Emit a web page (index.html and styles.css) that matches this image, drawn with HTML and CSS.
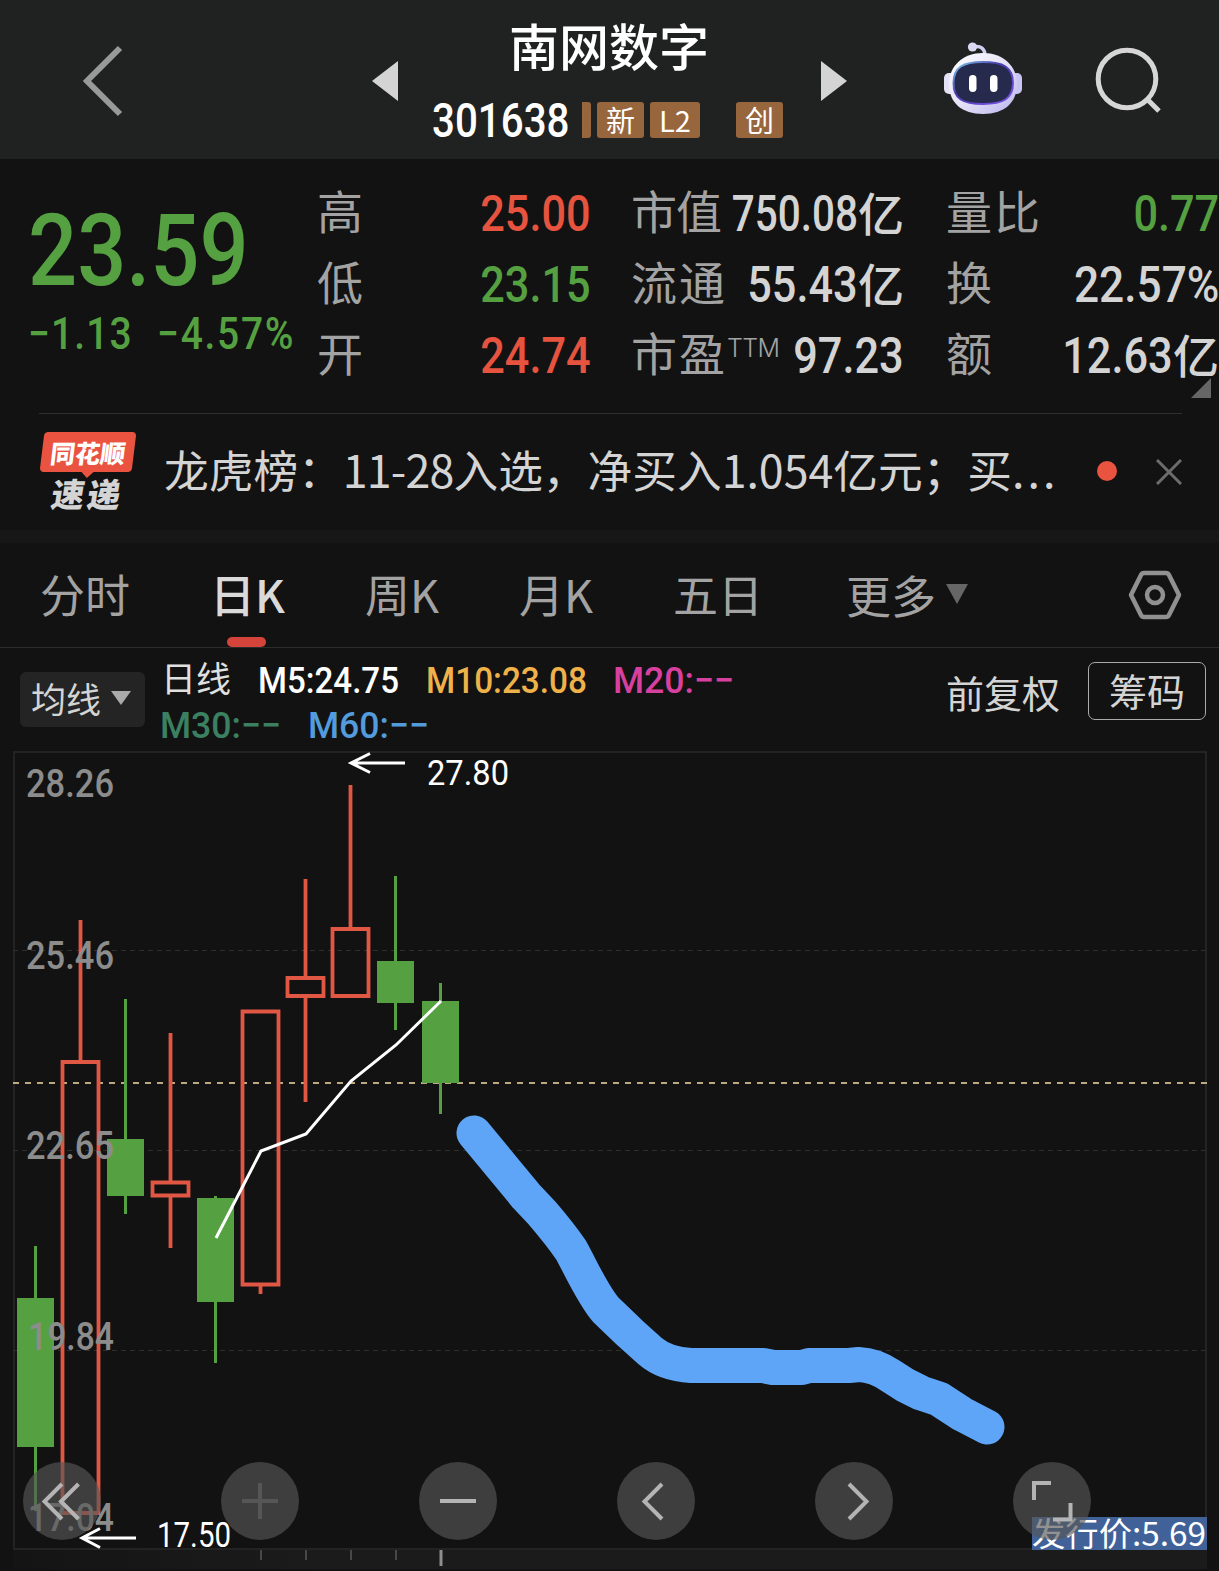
FILE: index.html
```html
<!DOCTYPE html>
<html lang="zh-CN">
<head>
    <meta charset="UTF-8">
    <meta name="viewport" content="width=device-width, initial-scale=1.0">
    <title>南网数字 301638</title>
    <link rel="stylesheet" href="styles.css">
</head>
<body>
    <header class="header">
        <svg class="back" width="50" height="80" viewBox="0 0 50 80"><path d="M41 8 L8 41 L41 74" fill="none" stroke="#999" stroke-width="6"/></svg>
        <svg class="prev" width="26" height="40" viewBox="0 0 26 40"><path d="M26 0V40L0 20z" fill="#d4d4d4"/></svg>
        <div class="stock">
            <h1>南网数字</h1>
            <div class="code-row">
                <span class="code num">301638</span>
                <span class="badge cut"></span>
                <span class="badge">新</span>
                <span class="badge l2">L2</span>
                <span class="badge gem">创</span>
            </div>
        </div>
        <svg class="next" width="26" height="40" viewBox="0 0 26 40"><path d="M0 0V40L26 20z" fill="#d4d4d4"/></svg>
        <!-- 机器人 -->
        <svg class="robot" width="80" height="76" viewBox="0 0 80 76">
            <defs>
                <linearGradient id="shell" x1="0" y1="0" x2="1" y2="1">
                    <stop offset="0" stop-color="#ffffff"/>
                    <stop offset=".5" stop-color="#e6e2f6"/>
                    <stop offset="1" stop-color="#b9b5ee"/>
                </linearGradient>
                <linearGradient id="rim" x1="0" y1="0" x2="1" y2="1">
                    <stop offset="0" stop-color="#7fd0ee"/>
                    <stop offset=".4" stop-color="#4b3bb0"/>
                    <stop offset="1" stop-color="#7a55e8"/>
                </linearGradient>
            </defs>
            <path d="M30 6C38 4 42 8 42 15" fill="none" stroke="#d3cff0" stroke-width="3.5"/>
            <circle cx="29.500" cy="6" r="4.600" fill="#dcd9f2"/>
            <rect x="1" y="32" width="12" height="21" rx="5" fill="#e4e1f6"/>
            <rect x="67" y="32" width="12" height="21" rx="5" fill="#c9c5f2"/>
            <path d="M40 12C60 12 74 25 74 43C74 62 61 73 40 73C19 73 6 62 6 43C6 25 20 12 40 12z" fill="url(#shell)"/>
            <path d="M40 21C60 21 70 26 70 42C70 58 60 63 40 63C20 63 10.500 58 10.500 42C10.500 26 20 21 40 21z" fill="#262b4e" stroke="url(#rim)" stroke-width="2"/>
            <rect x="26" y="34" width="7.500" height="17" rx="3.700" fill="#fff"/>
            <rect x="47" y="34" width="7.500" height="17" rx="3.700" fill="#fff"/>
        </svg>
        <svg class="search" width="70" height="70" viewBox="0 0 70 70"><g fill="none" stroke="#d6d6d6" stroke-width="5"><circle cx="33" cy="33" r="28.800"/><path d="M53 53L65 65"/></g></svg>
    </header>

    <section class="quote">
        <div class="price">
            <div class="last num">23.59</div>
            <div class="change"><span class="num">−1.13</span><span class="num">−4.57%</span></div>
        </div>
        <dl class="col col-a">
            <div><dt>高</dt><dd class="up"><span class="num">25.00</span></dd></div>
            <div><dt>低</dt><dd class="down"><span class="num">23.15</span></dd></div>
            <div><dt>开</dt><dd class="up"><span class="num">24.74</span></dd></div>
        </dl>
        <dl class="col col-b">
            <div><dt class="tight">市值</dt><dd><span class="num squeeze">750.08</span>亿</dd></div>
            <div><dt>流通</dt><dd><span class="num">55.43</span>亿</dd></div>
            <div><dt>市盈<sup>TTM</sup></dt><dd><span class="num">97.23</span></dd></div>
        </dl>
        <dl class="col col-c">
            <div><dt>量比</dt><dd class="down"><span class="num">0.77</span></dd></div>
            <div><dt>换</dt><dd><span class="num percent">22.57%</span></dd></div>
            <div><dt>额</dt><dd><span class="num">12.63</span>亿</dd></div>
        </dl>
        <span class="corner"></span>
    </section>

    <section class="news">
        <div class="logo">
            <span class="logo-top">同花顺</span>
            <span class="logo-bottom">速递</span>
        </div>
        <p>龙虎榜：<span class="date">11-28</span>入选，净买入<span class="amount">1.054</span>亿元；买<span class="dots">...</span></p>
        <span class="dot"></span>
        <svg class="close" width="26" height="26" viewBox="0 0 26 26"><path d="M1 1L25 25M25 1L1 25" stroke="#6c6c6c" stroke-width="3"/></svg>
    </section>

    <nav class="tabs">
        <a>分时</a>
        <a class="active">日K</a>
        <a>周K</a>
        <a>月K</a>
        <a>五日</a>
        <a class="more">更多<svg width="24" height="20" viewBox="0 0 24 20"><path d="M1 0H23L12 20z" fill="#666"/></svg></a>
        <svg class="settings" width="54" height="50" viewBox="0 0 54 50"><g fill="none" stroke="#919191" stroke-width="4.500" stroke-linejoin="round"><path d="M16 3H38Q40 3 41 5L51 25L41 45Q40 47 38 47H16Q14 47 13 45L3 25L13 5Q14 3 16 3z"/><circle cx="27" cy="25" r="8"/></g></svg>
    </nav>

    <section class="ma">
        <button class="ma-type">均线<svg width="20" height="14" viewBox="0 0 20 14"><path d="M0 0H20L10 14z" fill="#aaa"/></svg></button>
        <svg class="ma-values" width="600" height="88" viewBox="161 656 600 88">
            <text class="cjk" x="161" y="692">日线</text>
            <text x="258" y="693" fill="#fff" textLength="141" lengthAdjust="spacingAndGlyphs">M5:24.75</text>
            <text x="426" y="693" fill="#efb24a" textLength="161" lengthAdjust="spacingAndGlyphs">M10:23.08</text>
            <text x="613" y="693" fill="#d8409f" textLength="121" lengthAdjust="spacingAndGlyphs">M20:−−</text>
            <text x="160" y="738" fill="#3b8060" textLength="121" lengthAdjust="spacingAndGlyphs">M30:−−</text>
            <text x="308" y="738" fill="#529bdc" textLength="121" lengthAdjust="spacingAndGlyphs">M60:−−</text>
        </svg>
        <span class="adjust">前复权</span>
        <button class="chips">筹码</button>
    </section>

    <section class="chart">
        <svg width="1219" height="827" viewBox="0 744 1219 827">
            <defs>
                <linearGradient id="strip" x1="0" x2="1">
                    <stop offset="0" stop-color="#141414"/>
                    <stop offset=".25" stop-color="#1b1b1b"/>
                </linearGradient>
            </defs>
            <rect x="13" y="1549" width="1194" height="20" fill="url(#strip)"/>
            <rect x="14" y="752" width="1192" height="797" fill="none" stroke="#232323" stroke-width="2"/>
            <g stroke="#2f2f2f" stroke-dasharray="5 4">
                <path d="M13 950.500H1206M13 1150.500H1206M13 1350.500H1206"/>
            </g>
            <path d="M13 1083H1207" stroke="#bca97f" stroke-width="2" stroke-dasharray="6 6"/>

            <!-- 阴线 -->
            <g fill="#55a041">
                <path d="M17 1298h37v149h-37zM34 1246h3v265h-3z"/>
                <path d="M107 1139h37v57h-37zM124 999h3v215h-3z"/>
                <path d="M197 1198h37v104h-37zM214 1196h3v167h-3z"/>
                <path d="M377 961h37v42h-37zM394 876h3v154h-3z"/>
                <path d="M422 1001h37v82h-37zM439 983h3v131h-3z"/>
            </g>
            <!-- 阳线 -->
            <g fill="none" stroke="#e05844" stroke-width="3.800">
                <path d="M62.500 1062h36v451h-36zM80.500 920v142"/>
                <path d="M152.500 1182.500h36v13h-36zM170.500 1033v149M170.500 1196v52"/>
                <path d="M242.500 1011.500h36v273h-36zM260.500 1284v10"/>
                <path d="M287.500 978h36v18h-36zM305.500 879v99M305.500 996v106"/>
                <path d="M332.500 929h36v67h-36zM350.500 785v144"/>
            </g>
            <polyline points="216,1238 261,1151 306,1134 351,1081 396,1045 441,1001" fill="none" stroke="#fff" stroke-width="3"/>

            <g class="axis">
                <text x="26" y="797" textLength="88" lengthAdjust="spacingAndGlyphs">28.26</text>
                <text x="26" y="969" textLength="88" lengthAdjust="spacingAndGlyphs">25.46</text>
                <text x="26" y="1159" textLength="88" lengthAdjust="spacingAndGlyphs">22.65</text>
                <text x="28" y="1350" textLength="86" lengthAdjust="spacingAndGlyphs">19.84</text>
                <text x="28" y="1531" textLength="86" lengthAdjust="spacingAndGlyphs">17.04</text>
            </g>

            <path d="M474 1133L526 1196L542 1213Q560 1234 571 1250C582 1270 593 1295 606 1310L630 1333L650 1351Q665 1364 691 1365.500H763L773 1367.500H802L809 1365.500H849L859 1364.500Q875 1365 891 1376L905 1385L921 1393L939 1399L962 1414L987 1427" fill="none" stroke="#5ea5f7" stroke-width="35" stroke-linecap="round" stroke-linejoin="round"/>

            <rect x="1032" y="1517" width="175" height="33" fill="#416299"/>
            <text class="issue" x="1032" y="1546" textLength="174" lengthAdjust="spacingAndGlyphs">发行价:5.69</text>

            <path d="M261 1550v10M306 1550v10M351 1550v10M396 1550v10" stroke="#484848" stroke-width="2"/>
            <path d="M441 1550v16" stroke="#8e8e8e" stroke-width="3"/>
            <g class="mark">
                <path d="M405 763H351M370 753.500L351 763L370 772.500"/>
                <text x="427" y="785" textLength="82" lengthAdjust="spacingAndGlyphs">27.80</text>
            </g>
        </svg>

        <div class="controls">
            <button><svg viewBox="0 0 78 78"><path d="M39 22L21.500 39.500L39 57M55.500 22L38 39.500L55.500 57"/></svg></button>
            <button class="off"><svg viewBox="0 0 78 78"><path d="M21 39H57M39 21V57"/></svg></button>
            <button><svg viewBox="0 0 78 78"><path d="M21 39H57"/></svg></button>
            <button><svg viewBox="0 0 78 78"><path d="M45 22L27.500 39.500L45 57"/></svg></button>
            <button><svg viewBox="0 0 78 78"><path d="M34 22L51.500 39.500L34 57"/></svg></button>
            <button><svg viewBox="0 0 78 78"><path d="M21 38V21H38M57.500 41V57.500H40"/></svg></button>
        </div>

        <!-- 最低价标记压在按钮上面 -->
        <svg class="low" width="180" height="65" viewBox="78 1506 180 65">
            <g class="mark">
                <path d="M136 1538H82M100 1528.500L82 1538L100 1547.500"/>
                <text x="157" y="1547" textLength="74" lengthAdjust="spacingAndGlyphs">17.50</text>
            </g>
        </svg>
    </section>
</body>
</html>
```

FILE: styles.css
```css
* {
    box-sizing: border-box;
}
body {
    margin: 0;
    width: 1219px;
    height: 1571px;
    overflow: hidden;
    background-color: #121212;
    color: #d4d4d4;
    font-family: "Noto Sans CJK SC", sans-serif;
}
svg {
    display: block;
    flex: none;
}
button {
    border: none;
    padding: 0;
    color: inherit;
    font-family: inherit;
}
/* 窄体数字 */
.num {
    display: inline-block;
    font-family: Roboto, sans-serif;
    font-weight: 500;
    transform: scaleX(0.865);
    transform-origin: left;
    white-space: nowrap;
}

/* 顶部 */
.header {
    display: flex;
    align-items: flex-start;
    height: 159px;
    background-color: #202221;
}
.back {
    margin: 40px 0 0 79px;
}
.prev {
    margin: 61px 0 0 243px;
}
.stock {
    width: 423px;
    padding-left: 34px;
}
.stock h1 {
    margin: 7px 0 0 77px;
    font-size: 50px;
    line-height: 74px;
    font-weight: 500;
    color: #fff;
}
.code-row {
    display: flex;
    height: 36px;
    margin-top: 21px;
}
.code {
    width: 150px;
    font-size: 48px;
    line-height: 38px;
    color: #fff;
    transform: scaleX(0.84);
}
.badge {
    width: 47px;
    margin-right: 6px;
    border-radius: 3px;
    background-color: #97663c;
    color: #fff;
    font-size: 29px;
    line-height: 34px;
    text-align: center;
}
.cut {
    width: 9px;
    border-radius: 0 3px 3px 0;
}
.l2 {
    width: 50px;
}
.gem {
    margin-left: 30px;
}
.next {
    margin-top: 61px;
}
.robot {
    margin: 41px 0 0 96px;
}
.search {
    margin: 46px 0 0 71px;
}

/* 行情 */
.quote {
    position: relative;
    display: flex;
    height: 254px;
    margin-left: 28px;
    padding-top: 20px;
}
.price {
    width: 289px;
    color: #55a041;
}
.last {
    margin-top: 16px;
    font-size: 100px;
    line-height: 112px;
}
.change {
    display: flex;
    font-size: 45px;
    line-height: 54px;
    letter-spacing: 1.300px;
}
.change span:first-child {
    width: 131px;
}
.change span:last-child {
    letter-spacing: 2px;
}
.col {
    margin: 0;
}
.col > div {
    display: flex;
    justify-content: space-between;
    height: 71px;
    line-height: 66px;
    white-space: nowrap;
}
.col-a {
    width: 274px;
}
.col-b {
    width: 273px;
    margin-left: 40px;
}
.col-c {
    width: 273px;
    margin-left: 42px;
}
dt {
    margin-top: -3px;
    font-size: 46px;
    letter-spacing: 2px;
    color: #a3a3a3;
}
.tight {
    letter-spacing: -1px;
}
dt sup {
    display: inline-block;
    font-family: Inter, sans-serif;
    font-weight: 300;
    font-size: 25px;
    line-height: 20px;
    letter-spacing: -0.700px;
    vertical-align: 14px;
}
dd {
    margin: -1px 0 0 -70px;
    font-size: 46px;
    font-weight: 500;
}
dd .num {
    font-size: 50px;
    line-height: 70px;
    transform-origin: right;
}
dd .squeeze {
    transform: scaleX(0.81);
}
dd .percent {
    transform: scaleX(0.885);
}
.up {
    color: #e6543f;
}
.down {
    color: #55a041;
}
.corner {
    position: absolute;
    right: 8px;
    bottom: 15px;
    border-left: 20px solid transparent;
    border-bottom: 20px solid #666;
}

/* 快讯 */
.news {
    display: flex;
    height: 117px;
    margin: 0 37px 0 39px;
    border-top: 1px solid #2e2e2e;
}
.logo {
    position: relative;
    width: 97px;
    margin-top: 18px;
}
.logo-top {
    display: block;
    width: 92px;
    height: 40px;
    margin-left: 3px;
    border-radius: 4px;
    background-color: #ea5340;
    color: #fff;
    font-size: 25px;
    font-weight: 900;
    line-height: 40px;
    text-align: center;
    transform: skewX(-7deg);
}
.logo-top::after {
    content: "";
    position: absolute;
    left: 41px;
    top: 39px;
    border: 7px solid transparent;
    border-top-color: #ea5340;
}
.logo-bottom {
    display: block;
    margin-left: 13px;
    font-size: 33px;
    font-weight: 900;
    line-height: 42px;
    letter-spacing: 3px;
    transform: skewX(-9deg);
    white-space: nowrap;
}
.news p {
    width: 928px;
    margin: 20px 0 0 28px;
    font-size: 44.700px;
    line-height: 70px;
    white-space: nowrap;
}
.date {
    letter-spacing: -0.800px;
}
.dots {
    letter-spacing: 3px;
}
.dot {
    width: 20px;
    height: 20px;
    margin: 47px 0 0 5px;
    border-radius: 50%;
    background-color: #ea5340;
}
.close {
    margin: 45px 0 0 39px;
}

/* 周期 */
.tabs {
    display: flex;
    height: 118px;
    padding-left: 40px;
    border-top: 13px solid #171717;
    border-bottom: 1px solid #2c2c2c;
    font-size: 45px;
    line-height: 101px;
    color: #a3a3a3;
}
.tabs a {
    margin-right: 80px;
    white-space: nowrap;
}
.tabs .active {
    position: relative;
    color: #dadada;
    font-weight: 500;
}
.active::after {
    content: "";
    position: absolute;
    left: 17px;
    bottom: 0;
    width: 39px;
    height: 10px;
    border-radius: 5px;
    background-color: #d5443b;
}
.tabs .more {
    display: flex;
    align-items: center;
    height: 102px;
    gap: 9px;
    margin: 0 0 0 3px;
}
.settings {
    margin: 27px 0 0 159px;
}

/* 均线 */
.ma {
    display: flex;
    height: 96px;
    padding-left: 20px;
}
.ma-type {
    display: flex;
    align-items: center;
    gap: 10px;
    width: 125px;
    height: 55px;
    margin-top: 24px;
    padding: 0 0 3px 11px;
    border-radius: 6px;
    background-color: #242424;
    font-size: 35px;
    line-height: 50px;
}
.ma-values {
    margin: 8px 0 0 16px;
    overflow: visible;
    font-family: Roboto, sans-serif;
    font-weight: 500;
    font-size: 37px;
}
.ma-values .cjk {
    font-family: "Noto Sans CJK SC", sans-serif;
    font-weight: 400;
    font-size: 35px;
    fill: #e0e0e0;
}
.adjust {
    width: 142px;
    margin-left: 185px;
    font-size: 38px;
    line-height: 88px;
}
.chips {
    width: 118px;
    height: 58px;
    margin-top: 14px;
    border: 1px solid #aaa;
    border-radius: 7px;
    background: none;
    font-size: 38px;
    line-height: 52px;
    padding-bottom: 2px;
}

/* K线图 */
.chart {
    position: relative;
}
.axis {
    font-family: Roboto, sans-serif;
    font-weight: 500;
    font-size: 39px;
    fill: #8c8c8c;
}
.issue {
    font-family: "Noto Sans CJK SC", sans-serif;
    font-size: 33px;
    fill: #fff;
}
.mark path {
    fill: none;
    stroke: #fff;
    stroke-width: 3;
}
.mark text {
    font-family: Roboto, sans-serif;
    font-size: 35px;
    fill: #fff;
}
.controls {
    position: absolute;
    left: 23px;
    top: 718px;
    display: flex;
    gap: 120px;
}
.controls button {
    width: 78px;
    height: 78px;
    border-radius: 50%;
    background-color: rgba(86, 86, 86, 0.65);
}
.controls path {
    fill: none;
    stroke: #b4b4b4;
    stroke-width: 4;
}
.controls .off path {
    stroke: #565656;
}
.low {
    position: absolute;
    left: 78px;
    top: 762px;
}
```
